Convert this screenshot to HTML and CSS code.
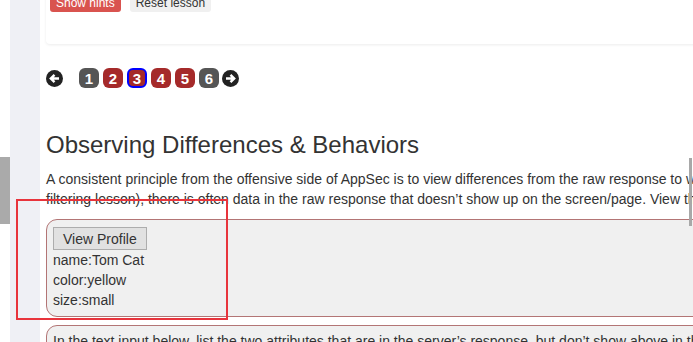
FILE: index.html
```html
<!DOCTYPE html>
<html>
<head>
  <meta charset="UTF-8">
  <title>Observing Differences &amp; Behaviors</title>
  <link rel="stylesheet" href="styles.css">
</head>
<body>
  <div class="gutter">
    <div class="gutter-thumb"></div>
  </div>
  <div class="sidebar"></div>

  <div class="main">
    <div class="content">
      <div class="lesson-card">
        <button class="btn btn-hints">Show hints</button>
        <button class="btn btn-reset">Reset lesson</button>
      </div>

      <div class="pages">
        <span class="page-arrow">
          <svg width="17" height="17" viewBox="0 0 17 17"><circle cx="8.5" cy="8.5" r="8.5" fill="#222"/><path d="M13 8.5H5M8.5 4.8L4.8 8.5 8.5 12.2" stroke="#fff" stroke-width="2.4" fill="none"/></svg>
        </span>
        <div class="page-list">
          <span class="page page-seen">1</span>
          <span class="page page-done">2</span>
          <span class="page page-done page-current">3</span>
          <span class="page page-done">4</span>
          <span class="page page-done">5</span>
          <span class="page page-seen">6</span>
        </div>
        <span class="page-arrow">
          <svg width="17" height="17" viewBox="0 0 17 17"><circle cx="8.5" cy="8.5" r="8.5" fill="#222"/><path d="M4 8.5H12M8.5 4.8L12.2 8.5 8.5 12.2" stroke="#fff" stroke-width="2.4" fill="none"/></svg>
        </span>
      </div>

      <h2 class="lesson-title">Observing Differences &amp; Behaviors</h2>
      <p class="lesson-text">A consistent principle from the offensive side of AppSec is to view differences from the raw response to what is visible. In other words (as you may have already noted in the client-side<br>filtering lesson), there is often data in the raw response that doesn’t show up on the screen/page. View the profile below and take note of the differences.</p>

      <div class="attack-box">
        <button class="btn-profile">View Profile</button>
        <div class="profile-line">name:Tom Cat</div>
        <div class="profile-line">color:yellow</div>
        <div class="profile-line">size:small</div>
      </div>

      <div class="attack-box attack-form">
        In the text input below, list the two attributes that are in the server’s response, but don’t show above in the profile.
      </div>
    </div>
  </div>

  <div class="annotation"></div>
  <div class="scroll-thumb"></div>
</body>
</html>
```

FILE: styles.css
```css
body {
  margin: 0;
  display: flex;
  height: 100vh;
  overflow: hidden;
  font-family: 'Liberation Sans', Arial, sans-serif;
  color: #333;
  background-color: #fff;
}

.gutter {
  width: 10px;
  flex-shrink: 0;
  padding-top: 157px;
}

.gutter-thumb {
  height: 67px;
  background-color: #aaa;
}

.sidebar {
  width: 30px;
  flex-shrink: 0;
  background-color: #eff0f5;
}

.main {
  flex: 1;
  min-width: 0;
  overflow: hidden;
  padding-left: 6px;
}

.content {
  width: 1500px;
}

.lesson-card {
  display: flex;
  align-items: flex-start;
  gap: 8px;
  margin-top: -10px;
  padding: 4px 4px 32px;
  border-radius: 4px;
  box-shadow: 0 1px 3px rgba(0, 0, 0, 0.08);
}

.btn {
  height: 18px;
  padding: 0 6px;
  border: none;
  border-radius: 3px;
  font-family: inherit;
  font-size: 12px;
}

.btn-hints {
  background-color: #d9534f;
  color: #fff;
}

.btn-reset {
  margin-left: 1px;
  background-color: #f0f0f0;
  color: #333;
}

.pages {
  display: flex;
  align-items: center;
  margin-top: 24px;
  height: 20px;
}

.page-arrow {
  display: flex;
  width: 17px;
  height: 17px;
}

.page-list {
  display: flex;
  gap: 4px;
  margin: 0 3px 0 16px;
}

.page {
  display: flex;
  justify-content: center;
  align-items: center;
  box-sizing: border-box;
  width: 20px;
  height: 20px;
  border-radius: 6px;
  color: #fff;
  font-size: 15px;
  font-weight: bold;
}

.page-seen {
  background-color: #555;
}

.page-done {
  background-color: #a52a2a;
}

.page-current {
  border: 2px solid #00f;
}

.lesson-title {
  margin: 42px 0 0;
  font-size: 24px;
  font-weight: normal;
  line-height: 30px;
}

.lesson-text {
  margin: 9px 0 10px;
  font-size: 14px;
  line-height: 20px;
}

.attack-box {
  padding: 7px 6px 6px;
  border: 1.5px solid #b37575;
  border-radius: 11px;
  background-color: #f0f0f0;
  font-size: 14px;
  line-height: 20px;
}

.btn-profile {
  display: block;
  height: 23px;
  padding: 0 9px;
  border: 1px solid #adadad;
  background-color: #e1e1e1;
  color: #333;
  font-family: inherit;
  font-size: 14px;
}

.attack-form {
  margin-top: 8px;
  padding-top: 5px;
}

.annotation {
  position: absolute;
  left: 16px;
  top: 199px;
  width: 212px;
  height: 121px;
  box-sizing: border-box;
  border: 2px solid #e8343c;
}

.scroll-thumb {
  position: absolute;
  left: 689px;
  top: 158px;
  width: 3px;
  height: 68px;
  background-color: #a8a8a8;
}
```
